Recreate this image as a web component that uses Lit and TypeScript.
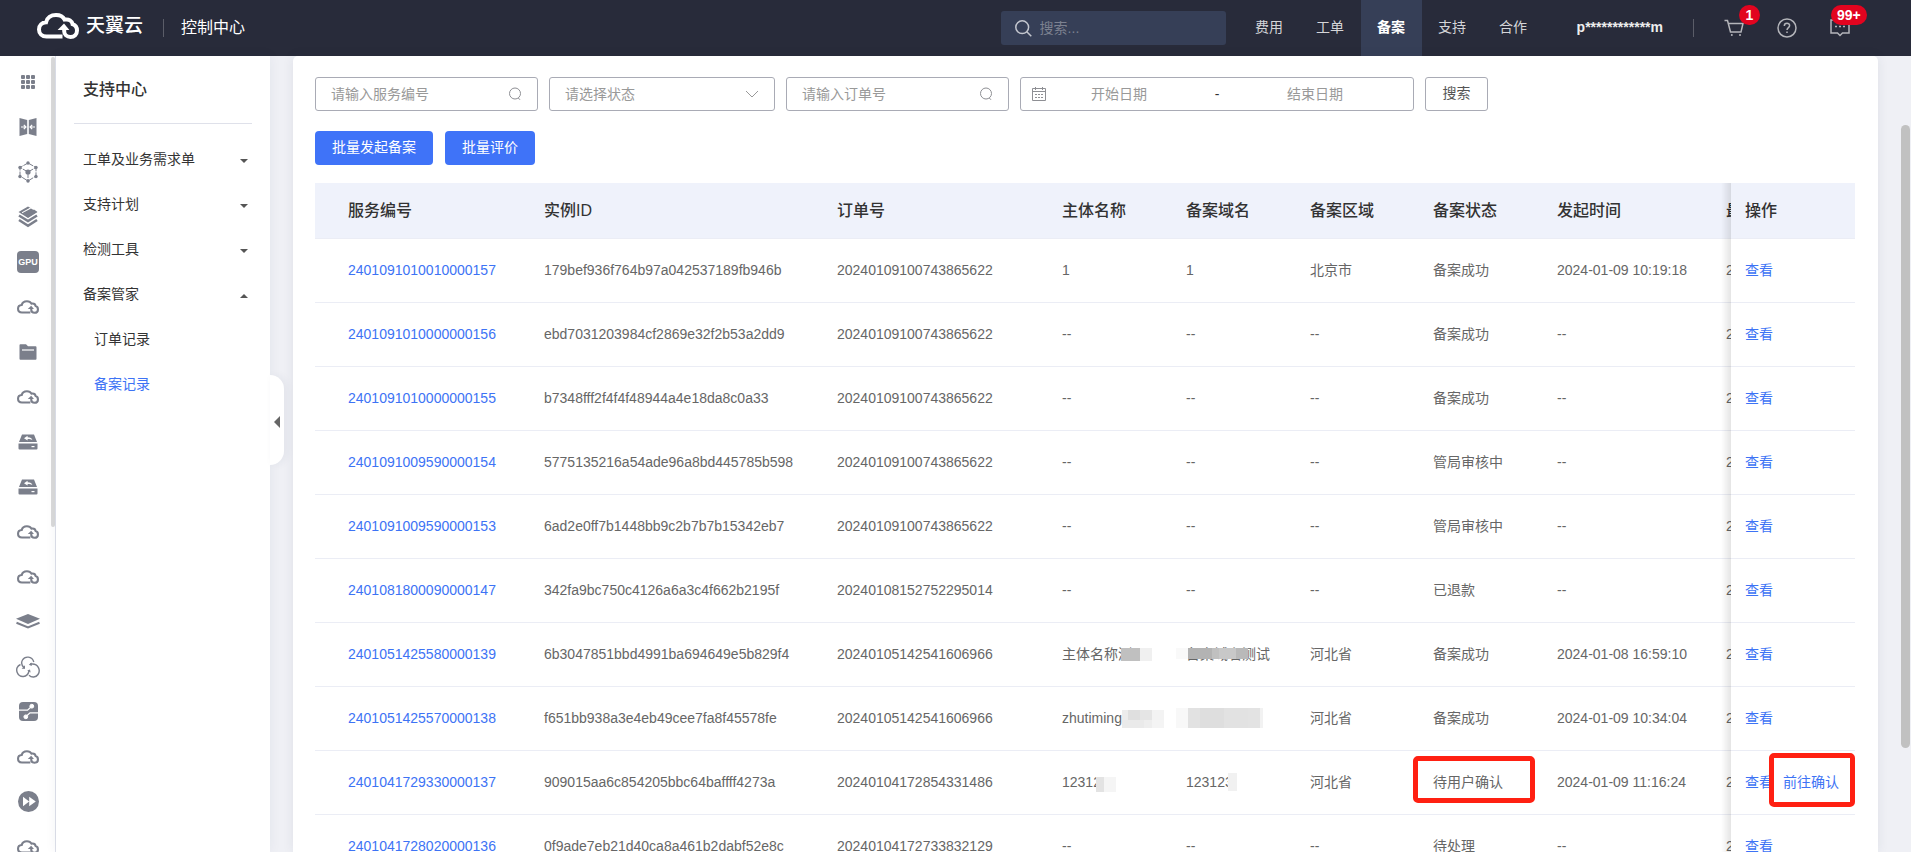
import { LitElement, html, svg, css, nothing } from "lit";
import { customElement, state } from "lit/decorators.js";
import { classMap } from "lit/directives/class-map.js";

interface FilingRecord {
  id: string;
  instance: string;
  order: string;
  subject?: string;
  domain?: string;
  region?: string;
  status: string;
  started?: string;
  updated: string;
  subjectMask?: string;
  domainMask?: string;
  confirm?: boolean;
}

const RECORDS: FilingRecord[] = [
  { id: "2401091010010000157", instance: "179bef936f764b97a042537189fb946b", order: "20240109100743865622", subject: "1", domain: "1", region: "北京市", status: "备案成功", started: "2024-01-09 10:19:18", updated: "2024" },
  { id: "2401091010000000156", instance: "ebd7031203984cf2869e32f2b53a2dd9", order: "20240109100743865622", status: "备案成功", updated: "2024" },
  { id: "2401091010000000155", instance: "b7348fff2f4f4f48944a4e18da8c0a33", order: "20240109100743865622", status: "备案成功", updated: "2024" },
  { id: "2401091009590000154", instance: "5775135216a54ade96a8bd445785b598", order: "20240109100743865622", status: "管局审核中", updated: "2024" },
  { id: "2401091009590000153", instance: "6ad2e0ff7b1448bb9c2b7b7b15342eb7", order: "20240109100743865622", status: "管局审核中", updated: "2024" },
  { id: "2401081800090000147", instance: "342fa9bc750c4126a6a3c4f662b2195f", order: "20240108152752295014", status: "已退款", updated: "2024" },
  { id: "2401051425580000139", instance: "6b3047851bbd4991ba694649e5b829f4", order: "20240105142541606966", subject: "主体名称测", domain: "备案域名测试", region: "河北省", status: "备案成功", started: "2024-01-08 16:59:10", updated: "2024", subjectMask: "a", domainMask: "b" },
  { id: "2401051425570000138", instance: "f651bb938a3e4eb49cee7fa8f45578fe", order: "20240105142541606966", subject: "zhutimingc", domain: "", region: "河北省", status: "备案成功", started: "2024-01-09 10:34:04", updated: "2024", subjectMask: "c", domainMask: "d" },
  { id: "2401041729330000137", instance: "909015aa6c854205bbc64baffff4273a", order: "20240104172854331486", subject: "12312", domain: "123123", region: "河北省", status: "待用户确认", started: "2024-01-09 11:16:24", updated: "2024", subjectMask: "e", domainMask: "f", confirm: true },
  { id: "2401041728020000136", instance: "0f9ade7eb21d40ca8a461b2dabf52e8c", order: "20240104172733832129", status: "待处理", updated: "2024" },
];

const COLUMNS: [string, string][] = [
  ["服务编号", "c-id"],
  ["实例ID", "c-instance"],
  ["订单号", "c-order"],
  ["主体名称", "c-short"],
  ["备案域名", "c-short"],
  ["备案区域", "c-region"],
  ["备案状态", "c-short"],
  ["发起时间", "c-time"],
  ["最近更新", "c-time"],
];

const cloudShape = svg`
  <path d="M25.5 23.5H9.5C5 23.5 2 20.5 2 16.4C2 12.4 5 9.6 9 9.3C10 4.6 14 2 19 2C23 2 26.2 3.8 27.6 6.6C32 5.8 35 8 35.6 11.2C38.6 12.2 40 14.8 40 17.6C40 21.4 37.2 24 33.5 24C29.8 24 27.2 21.6 27.2 18.2V15"
    fill="none" stroke="currentColor" stroke-width="4"/>
  <path d="M20.6 17L27 10.4L32.4 17z" fill="currentColor"/>`;

const cloud = html`<svg width="22" height="14" viewBox="0 0 42 26">${cloudShape}</svg>`;

const drive = html`<svg width="20" height="16" viewBox="0 0 20 16" fill="currentColor">
  <path d="M4 0.5h12l3 7.500H1z"/><path d="M0.500 9.500h19v5a1 1 0 0 1-1 1h-17a1 1 0 0 1-1-1z"/>
  <path d="M6 4.200l3.600-2.400v1.500c3 0 4.400 1 4.800 3c-1.400-1.200-2.600-1.300-4.800-1.300v1.600z" fill="#fff"/>
  <rect x="13.500" y="12" width="3" height="1.200" fill="#fff"/></svg>`;

const RAIL = [
  { name: "全部产品", icon: html`<svg width="14" height="14" viewBox="0 0 14 14" fill="currentColor">${[0, 5, 10].map((y) => [0, 5, 10].map((x) => svg`<rect x=${x} y=${y} width="4" height="4" rx="1"/>`))}</svg>` },
  { name: "迁移", icon: html`<svg width="18" height="18" viewBox="0 0 18 18"><path d="M0.500 0L8.200 2v14L0.500 18zM17.500 0L9.800 2v14l7.700 2z" fill="currentColor"/><path d="M2 9h5M4.800 6.800L7 9l-2.200 2.200M16 9h-5M13.200 6.800L11 9l2.200 2.200" fill="none" stroke="#fff" stroke-width="1.200"/></svg>` },
  { name: "容器", icon: html`<svg width="20" height="22" viewBox="0 0 20 22"><path d="M10 2L18 6.500V15L10 20L2 15V6.500zM10 11v8M10 11l-7-4M10 11l7-4" fill="none" stroke="currentColor" stroke-width="1" stroke-dasharray="6 1"/><g fill="currentColor"><circle cx="10" cy="11" r="2.600"/><circle cx="10" cy="2" r="1.700"/><circle cx="10" cy="20" r="1.700"/><circle cx="2" cy="6.500" r="1.700"/><circle cx="18" cy="6.500" r="1.700"/><circle cx="2" cy="15.500" r="1.700"/><circle cx="18" cy="15.500" r="1.700"/></g></svg>` },
  { name: "堆栈", icon: html`<svg width="20" height="22" viewBox="0 0 20 22"><path d="M0.500 6L10 0.500L12.500 2L5 6.500L10 9.500L15 6.500L13 5.300L16 3.500L19.500 6L10 12z" fill="currentColor"/><path d="M5 6.500L13 2.500L19 6L10 11.500z" fill="currentColor"/><path d="M4 6.700L12 2.300" stroke="#fff" stroke-width="1"/><path d="M1 9.500L10 15L19 9.500M1 14L10 19.800L19 14" fill="none" stroke="currentColor" stroke-width="2.600"/></svg>` },
  { name: "GPU", icon: html`<span class="gpu">GPU</span>` },
  { name: "云主机", icon: cloud },
  { name: "文件", icon: html`<svg width="18" height="16" viewBox="0 0 18 16"><path d="M0.500 1.200Q0.500 0.300 1.400 0.300H7L9 2.300H16.600Q17.500 2.300 17.500 3.200V14.800Q17.500 15.700 16.600 15.700H1.400Q0.500 15.700 0.500 14.800z" fill="currentColor"/><path d="M3 6h12" stroke="#fff" stroke-width="1.200"/></svg>` },
  { name: "云网络", icon: cloud },
  { name: "云备份", icon: drive },
  { name: "云硬盘备份", icon: drive },
  { name: "云存储", icon: cloud },
  { name: "云安全", icon: cloud },
  { name: "镜像", icon: html`<svg width="24" height="15" viewBox="0 0 24 15"><path d="M12 0L24 4.700L12 10L0 4.700z" fill="currentColor"/><path d="M0.500 8.700L12 13.400L23.500 8.700" fill="none" stroke="currentColor" stroke-width="2"/></svg>` },
  { name: "弹性", icon: html`<svg width="24" height="22" viewBox="0 0 24 22" fill="none" stroke="currentColor" stroke-width="1.400"><path d="M8.500 12.300C5.500 9.500 5 6.500 6.500 4C9 -0.200 16 0 17.800 6"/><path d="M4.500 8.500C1 9.800 0 13.500 1.200 16.500C3.500 22 11.500 22 13 15"/><path d="M13 19.200C15.500 21.800 20 21.500 22 18.500C25 14 22 8 16.500 8H14"/><path d="M9 9.200v3.600H5.600zM11.200 14.400l2.800-.9l.6 3zM15.600 6.400l-2.800 2.400l3 1.300z" fill="currentColor" stroke="none"/></svg>` },
  { name: "流水线", icon: html`<svg width="19" height="19" viewBox="0 0 19 19"><rect width="19" height="19" rx="4" fill="currentColor"/><g stroke="#fff" fill="#fff"><path d="M0 8.200h8.500L12.500 4.500M19 10.800h-8L7 14.500" fill="none" stroke-width="1.200"/><circle cx="12.800" cy="4.200" r="1.900"/><circle cx="6.800" cy="14.800" r="1.900"/></g></svg>` },
  { name: "云监控", icon: cloud },
  { name: "加速", icon: html`<svg width="21" height="21" viewBox="0 0 21 21"><circle cx="10.500" cy="10.500" r="10.500" fill="currentColor"/><path d="M5 5.800L11.200 10.500L5 15.200zM11.200 5.800L17.800 10.500L11.200 15.200z" fill="#fff"/></svg>` },
  { name: "云服务", icon: cloud },
];

const lens = html`<svg class="lens" width="14" height="14" viewBox="0 0 14 14" fill="none" stroke="currentColor"><circle cx="7" cy="6.500" r="5.500"/><path d="M10.300 11L12 12.800"/></svg>`;

@customElement("app-root")
export class AppRoot extends LitElement {
  @state() private keyword = "";

  static styles = css`
    :host {
      display: flex;
      flex-direction: column;
      height: 100vh;
      overflow: hidden;
      background: #eff0f5;
      color: #333;
      font: 14px/20px "Liberation Sans", "Noto Sans CJK SC", sans-serif;
    }
    * { box-sizing: border-box; }
    a { color: inherit; text-decoration: none; }
    button, input, select { font: inherit; color: inherit; margin: 0; }
    svg { display: block; flex: none; }

    .top {
      display: flex;
      align-items: center;
      flex: none;
      height: 56px;
      padding: 0 61px 0 37px;
      background: #282b3a;
      color: #d4d5d8;
    }
    .brand { display: flex; align-items: center; gap: 7px; color: #fff; font-size: 19px; font-weight: 500; padding-bottom: 4px; }
    .rule { width: 1px; height: 18px; background: #5b5d68; }
    .brand + .rule { margin: 0 17px 0 20px; }
    .console { font-size: 16px; color: #fff; }
    .find { display: flex; align-items: center; gap: 8px; width: 225px; height: 34px; margin-left: auto; padding: 0 14px; border-radius: 3px; background: #363f57; }
    .find input { flex: 1; min-width: 0; border: 0; outline: 0; padding: 0; background: none; }
    .find input::placeholder { color: #7c8190; opacity: 1; }
    .nav { display: flex; align-self: stretch; margin-left: 13px; }
    .nav a { display: flex; align-items: center; justify-content: center; width: 61px; padding-bottom: 2px; }
    .nav .on { background: #363f57; color: #fff; font-weight: 700; }
    .user { margin: 0 30px 0 33px; padding-bottom: 2px; color: #eee; font-weight: 700; }
    .tools { display: flex; align-items: center; gap: 33px; margin-left: 30px; }
    .tool { position: relative; display: flex; padding: 0; border: 0; background: none; color: #b4b5ba; }
    .badge { position: absolute; left: 15px; top: -14px; min-width: 21px; padding: 0 6px; border-radius: 10px; background: #e2041f; color: #fff; font-weight: 700; text-align: center; }
    .badge.wide { left: 1px; }

    .body { display: flex; flex: 1; min-height: 0; }
    .rail { display: flex; flex: none; width: 56px; overflow: hidden; border-right: 1px solid #dfe1ea; background: #fff; color: #7b7f8b; }
    .rail nav { flex: 1; padding: 3px 0 0 5px; }
    .rail a { display: flex; align-items: center; justify-content: center; height: 45px; }
    .rail-bar { width: 4px; height: 59%; margin-top: 1px; border-radius: 2px; background: #dadada; }
    .gpu { width: 22px; border-radius: 4px; background: #7b7f8b; color: #fff; line-height: 22px; text-align: center; font-size: 9px; font-weight: 700; }

    .side { position: relative; flex: none; width: 214px; padding: 10px 18px; background: #fff; box-shadow: 0 0 12px rgba(40, 50, 80, 0.06); }
    .side h2 { margin: 0; padding: 1px 9px 10px; border-bottom: 1px solid #dfe1ea; font-size: 16px; font-weight: 500; line-height: 46px; }
    .side ul { margin: 0; padding: 0; list-style: none; }
    .side > ul { padding-top: 12px; }
    .side li a { display: flex; align-items: center; justify-content: space-between; height: 45px; padding: 0 4px 0 9px; }
    .side li li a { padding-left: 20px; }
    .side .on { color: #3d73f5; }
    .caret { border: 4px solid transparent; border-top-color: #555; border-bottom: 0; margin: 4px 0 0; }
    .caret.up { border-top: 0; border-bottom: 4px solid #555; }
    .fold { position: absolute; left: 100%; top: 319px; display: flex; align-items: center; width: 14px; height: 90px; padding: 3px 4px 0; border: 0; border-radius: 0 14px 14px 0; background: #fff; box-shadow: 3px 0 8px rgba(40, 50, 80, 0.06); }

    .card { display: flex; flex-direction: column; flex: 1; min-width: 0; margin: 0 23px; padding: 21px 23px 0 22px; border-radius: 5px 5px 0 0; background: #fff; box-shadow: 0 0 12px rgba(40, 50, 80, 0.08); }
    .filters { display: flex; gap: 11px; }
    .box { display: flex; align-items: center; width: 223px; height: 34px; padding: 0 15px; border: 1px solid #a9abb5; border-radius: 3px; color: #8e8f94; }
    .box input, .box select { flex: 1; width: 0; min-width: 0; height: 30px; padding: 0; border: 0; outline: 0; background: none; appearance: none; }
    .box input::placeholder { color: #999; opacity: 1; }
    .pick { width: 226px; color: #999; }
    .range { width: 394px; padding: 0 30px 0 11px; gap: 5px; }
    .range input { text-align: center; }
    .range .dash { width: 50px; text-align: center; color: #333; }
    .plain { width: 63px; height: 34px; padding: 0 0 2px; border: 1px solid #a9abb5; border-radius: 3px; background: #fff; color: #555; }
    .actions { display: flex; gap: 12px; padding: 20px 0 18px; }
    .actions button { height: 34px; padding: 0 17px 2px; border: 0; border-radius: 4px; background: #3f73f8; color: #fff; }

    .scroll { flex: 1; min-height: 0; overflow: hidden; }
    table { width: 100%; min-width: 1689px; table-layout: fixed; border-collapse: separate; border-spacing: 0; color: #666; }
    th, td { position: relative; padding: 0 14px; border-bottom: 1px solid #ebedf5; text-align: left; white-space: nowrap; }
    th { height: 56px; background: #eff2fb; color: #333; font-size: 16px; font-weight: 500; }
    td { height: 64px; padding-bottom: 2px; }
    th:first-child, td:first-child { padding-left: 33px; }
    .c-id { width: 215px; }
    .c-instance { width: 293px; }
    .c-order { width: 225px; }
    .c-short { width: 124px; }
    .c-region { width: 123px; }
    .c-time { width: 169px; }
    .c-act { width: 124px; }
    .act { position: sticky; right: 0; z-index: 1; }
    td.act { background: #fff; }
    .act::before { content: ""; position: absolute; right: 100%; top: 0; bottom: -1px; width: 10px; background: linear-gradient(to left, rgba(0, 0, 0, 0.1), rgba(0, 0, 0, 0)); }
    td a { color: #3d73f5; }
    .act a + a { margin-left: 10px; }
    .mark { position: absolute; border: 5px solid #ff2012; border-radius: 5px; pointer-events: none; }
    .mark.status { left: -6px; top: 5px; width: 122px; height: 47px; }
    .mark.go { right: 0; top: 2px; width: 86px; height: 54px; }

    .mask { position: absolute; }
    .mask.a { left: 73px; top: 25px; width: 31px; height: 13px; background: linear-gradient(to right, #c0c0c0 19px, #f0f0f0 19px); }
    .mask.b { left: 4px; top: 25px; width: 72px; height: 11px; background: linear-gradient(to right, #f9f9f9 12px, #b3b3b3 12px 36px, #c0c0c0 36px 43px, #c8c8c8 43px 60px, #b9b9b9 60px); }
    .mask.c { left: 74px; top: 23px; width: 42px; height: 18px; background: linear-gradient(to right, #ececec 6px, #dfdfdf 6px 18px, #e5e5e5 18px 30px, #f3f3f3 30px); }
    .mask.c::after { content: ""; position: absolute; inset: 10px 0 0; background: linear-gradient(to right, #eaeaea 22px, #eee 22px 30px, #f4f4f4 30px); }
    .mask.d { left: 4px; top: 21px; width: 87px; height: 20px; background: linear-gradient(to right, #f8f8f8 12px, #e2e2e2 12px 24px, #dedede 24px 48px, #e2e2e2 48px 72px, #e3e3e3 72px 84px, #f2f2f2 84px); }
    .mask.e { left: 48px; top: 26px; width: 20px; height: 15px; background: linear-gradient(to right, #e3e3e3 8px, #f5f5f5 8px); }
    .mask.f { left: 56px; top: 22px; width: 9px; height: 18px; background: #f1f1f1; }

    .page-bar { flex: none; width: 10px; padding: 69px 1px 0 0; }
    .page-bar div { height: 86%; width: 9px; max-height: 623px; border-radius: 5px; background: #c1c1c1; }
  `;

  private cell(text: string | undefined, mask?: string) {
    return html`<td>${text ?? "--"}${mask ? html`<span class="mask ${mask}"></span>` : nothing}</td>`;
  }

  private menu(label: string, open = false) {
    return html`<a href="#">${label}<span class=${classMap({ caret: true, up: open })}></span></a>`;
  }

  render() {
    return html`
      <header class="top">
        <a class="brand" href="#"><svg width="42" height="26" viewBox="0 0 42 26">${cloudShape}</svg>天翼云</a>
        <span class="rule"></span>
        <a class="console" href="#">控制中心</a>
        <label class="find">
          <svg width="17" height="17" viewBox="0 0 17 17" fill="none" stroke="#c3c6ce" stroke-width="1.500"><circle cx="7.200" cy="7.200" r="6.400"/><path d="M11.800 11.800L16.300 16.300"/></svg>
          <input type="text" placeholder="搜索..." aria-label="搜索" .value=${this.keyword}
            @input=${(e: Event) => (this.keyword = (e.target as HTMLInputElement).value)} />
        </label>
        <nav class="nav">
          ${["费用", "工单", "备案", "支持", "合作"].map((t) => html`<a href="#" class=${classMap({ on: t === "备案" })}>${t}</a>`)}
        </nav>
        <a class="user" href="#">p************m</a>
        <span class="rule"></span>
        <div class="tools">
          <button class="tool" aria-label="购物车">
            <svg width="20" height="18" viewBox="0 0 20 18" fill="none" stroke="currentColor" stroke-width="1.500"><path d="M0.500 1.500H3.500L6.500 13H17L19 4.500H4.300"/><circle cx="7.800" cy="16" r="1" fill="currentColor" stroke="none"/><circle cx="16" cy="16" r="1" fill="currentColor" stroke="none"/></svg>
            <span class="badge">1</span>
          </button>
          <button class="tool" aria-label="帮助">
            <svg width="20" height="20" viewBox="0 0 20 20" fill="none" stroke="currentColor" stroke-width="1.500"><circle cx="10" cy="10" r="9"/><path d="M7.300 8C7.300 4.300 12.800 4.500 12.600 7.800C12.500 9.600 10 9.700 10 12M10 13.500v1.600"/></svg>
          </button>
          <button class="tool" aria-label="消息">
            <svg width="20" height="18" viewBox="0 0 20 18" fill="none" stroke="currentColor" stroke-width="1.500"><path d="M1 1H19V14H12.500L10 16.500L7.500 14H1z"/><path d="M5 7.500h2M9 7.500h2M13 7.500h2"/></svg>
            <span class="badge wide">99+</span>
          </button>
        </div>
      </header>
      <div class="body">
        <div class="rail">
          <nav>${RAIL.map((r) => html`<a href="#" aria-label=${r.name}>${r.icon}</a>`)}</nav>
          <div class="rail-bar"></div>
        </div>
        <aside class="side">
          <h2>支持中心</h2>
          <ul>
            <li>${this.menu("工单及业务需求单")}</li>
            <li>${this.menu("支持计划")}</li>
            <li>${this.menu("检测工具")}</li>
            <li>
              ${this.menu("备案管家", true)}
              <ul>
                <li><a href="#">订单记录</a></li>
                <li><a href="#" class="on">备案记录</a></li>
              </ul>
            </li>
          </ul>
          <button class="fold" aria-label="收起菜单"><svg width="6" height="12" viewBox="0 0 6 12"><path d="M6 0v12L0 6z" fill="#666"/></svg></button>
        </aside>
        <main class="card">
          <div class="filters">
            <label class="box"><input type="text" placeholder="请输入服务编号" aria-label="服务编号" />${lens}</label>
            <label class="box pick">
              <select aria-label="状态"><option>请选择状态</option></select>
              <svg width="14" height="8" viewBox="0 0 14 8" fill="none" stroke="currentColor"><path d="M1 1L7 7L13 1"/></svg>
            </label>
            <label class="box"><input type="text" placeholder="请输入订单号" aria-label="订单号" />${lens}</label>
            <div class="box range">
              <svg width="14" height="14" viewBox="0 0 14 14" fill="none" stroke="currentColor"><path d="M0.500 1.500h13v12h-13zM0.500 4.500h13M3.500 0v3M10.500 0v3"/><path d="M3 7.500h8M3 10.500h8" stroke-dasharray="2 1"/></svg>
              <input type="text" placeholder="开始日期" aria-label="开始日期" />
              <span class="dash">-</span>
              <input type="text" placeholder="结束日期" aria-label="结束日期" />
            </div>
            <button class="plain">搜索</button>
          </div>
          <div class="actions"><button>批量发起备案</button><button>批量评价</button></div>
          <div class="scroll">
            <table>
              <thead>
                <tr>
                  ${COLUMNS.map(([t, c]) => html`<th class=${c}>${t}</th>`)}
                  <th class="c-act act">操作</th>
                </tr>
              </thead>
              <tbody>
                ${RECORDS.map((r) => html`<tr>
                  <td><a href="#">${r.id}</a></td>
                  <td>${r.instance}</td>
                  <td>${r.order}</td>
                  ${this.cell(r.subject, r.subjectMask)}
                  ${this.cell(r.domain, r.domainMask)}
                  ${this.cell(r.region)}
                  <td>${r.status}${r.confirm ? html`<span class="mark status"></span>` : nothing}</td>
                  ${this.cell(r.started)}
                  <td>${r.updated}</td>
                  <td class="act"><a href="#">查看</a>${r.confirm ? html`<a href="#">前往确认</a><span class="mark go"></span>` : nothing}</td>
                </tr>`)}
              </tbody>
            </table>
          </div>
        </main>
        <div class="page-bar"><div></div></div>
      </div>
    `;
  }
}
